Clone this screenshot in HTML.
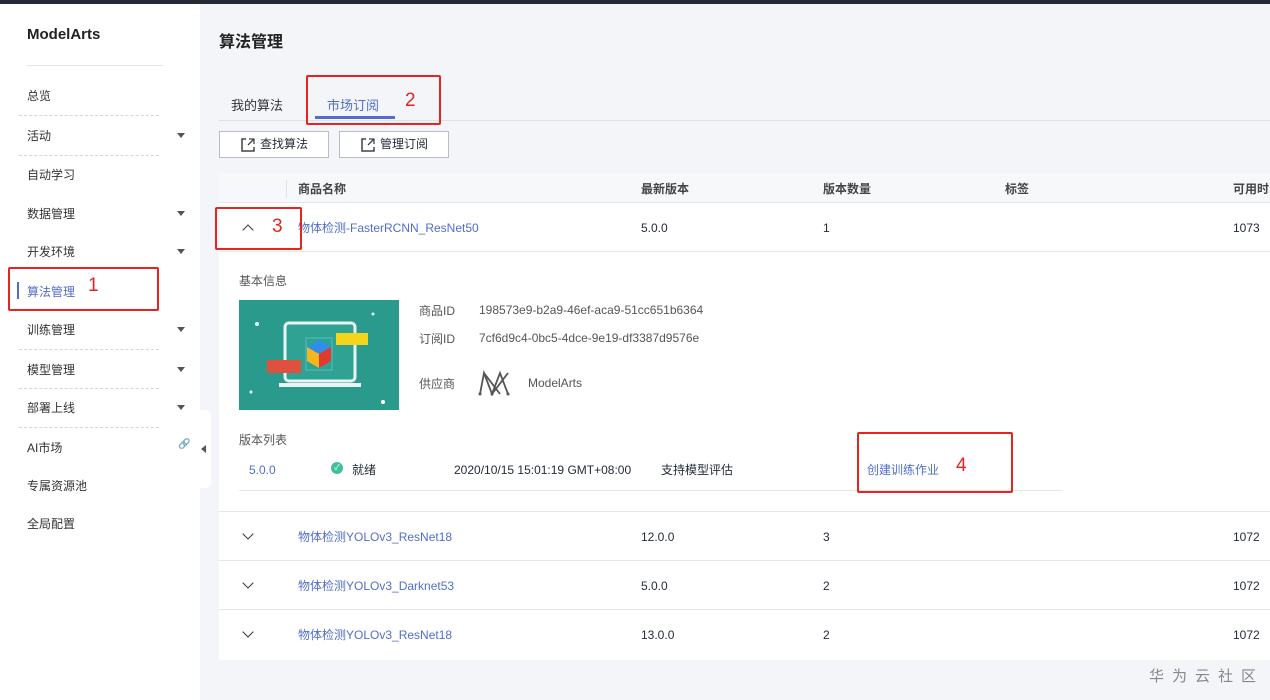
<!DOCTYPE html>
<html><head><meta charset="utf-8"><style>
*{margin:0;padding:0;box-sizing:border-box}
body{width:1270px;height:700px;overflow:hidden;background:#f3f5f9;font-family:"Liberation Sans","Noto Sans CJK SC",sans-serif;font-size:12px;color:#252b3a;position:relative}
.a{position:absolute}
.top{left:0;top:0;width:1270px;height:4px;background:#252933}
.side{left:0;top:4px;width:200px;height:696px;background:#fff}
.nav{left:27px;color:#333;font-size:12px}
.dash{left:19px;width:140px;border-top:1px dashed #d4d6da}
.tri{width:0;height:0;border-left:4px solid transparent;border-right:4px solid transparent;border-top:5px solid #555}
.red{border:2px solid #e52420;border-radius:2px}
.rn{color:#e52420;font-size:19px}
.btn{height:27px;border:1px solid #b8bcc4;background:#fff;font-size:12px;padding-left:40px;line-height:25px}
.card{left:219px;top:173px;width:1051px;height:487px;background:#fff}
.hd{left:219px;top:173px;width:1051px;height:30px;background:#f7f8fa;border-bottom:1px solid #e5e7eb}
.link{color:#526ecc}
.line{left:219px;width:1051px;border-top:1px solid #e5e7eb}
.chev{width:8px;height:8px;border-left:1.5px solid #333;border-bottom:1.5px solid #333}
</style></head><body>
<div class="a top"></div>
<div class="a side"></div>
<div class="a" style="left:27px;top:26px;font-size:15px;font-weight:bold;color:#222">ModelArts</div>
<div class="a" style="left:27px;top:65px;width:136px;border-top:1px solid #e3e5e8"></div>
<div class="a nav" style="top:87px">总览</div>
<div class="a dash" style="top:115px"></div>
<div class="a nav" style="top:127px">活动</div><div class="a tri" style="left:177px;top:133px"></div>
<div class="a dash" style="top:155px"></div>
<div class="a nav" style="top:166px">自动学习</div>
<div class="a nav" style="top:205px">数据管理</div><div class="a tri" style="left:177px;top:211px"></div>
<div class="a nav" style="top:243px">开发环境</div><div class="a tri" style="left:177px;top:249px"></div>
<div class="a" style="left:17px;top:282px;width:2px;height:17px;background:#526ecc"></div>
<div class="a nav" style="top:283px;color:#526ecc">算法管理</div>
<div class="a dash" style="top:310px"></div>
<div class="a nav" style="top:321px">训练管理</div><div class="a tri" style="left:177px;top:327px"></div>
<div class="a dash" style="top:349px"></div>
<div class="a nav" style="top:361px">模型管理</div><div class="a tri" style="left:177px;top:367px"></div>
<div class="a dash" style="top:388px"></div>
<div class="a nav" style="top:399px">部署上线</div><div class="a tri" style="left:177px;top:405px"></div>
<div class="a dash" style="top:427px"></div>
<div class="a nav" style="top:439px">AI市场</div><div class="a" style="left:178px;top:439px;font-size:10px;color:#777">🔗</div>
<div class="a nav" style="top:477px">专属资源池</div>
<div class="a nav" style="top:515px">全局配置</div>
<div class="a" style="left:197px;top:410px;width:14px;height:78px;background:#fff;border-radius:0 6px 6px 0"></div>
<div class="a" style="left:201px;top:445px;width:0;height:0;border-top:4px solid transparent;border-bottom:4px solid transparent;border-right:5px solid #555"></div>
<div class="a red" style="left:8px;top:267px;width:151px;height:44px"></div><div class="a rn" style="left:88px;top:275px">1</div>

<div class="a" style="left:219px;top:28px;font-size:16px;font-weight:bold;color:#222">算法管理</div>
<div class="a" style="left:219px;top:120px;width:1051px;border-top:1px solid #dfe1e6"></div>
<div class="a" style="left:231px;top:95px;font-size:13px;color:#333">我的算法</div>
<div class="a" style="left:327px;top:95px;font-size:13px;color:#526ecc">市场订阅</div>
<div class="a" style="left:315px;top:116px;width:80px;height:3px;background:#526ecc"></div>
<div class="a red" style="left:306px;top:75px;width:135px;height:50px"></div><div class="a rn" style="left:405px;top:90px">2</div>
<div class="a btn" style="left:219px;top:131px;width:110px">查找算法</div>
<div class="a btn" style="left:339px;top:131px;width:110px">管理订阅</div>
<svg class="a" style="left:240px;top:137px" width="16" height="16"><path d="M6 2 H2 V14 H14 V10" stroke="#444" stroke-width="1.5" fill="none"/><path d="M9 2 H14 V7 M14 2 L8 8" stroke="#444" stroke-width="1.3" fill="none"/></svg>
<svg class="a" style="left:360px;top:137px" width="16" height="16"><path d="M6 2 H2 V14 H14 V10" stroke="#444" stroke-width="1.5" fill="none"/><path d="M9 2 H14 V7 M14 2 L8 8" stroke="#444" stroke-width="1.3" fill="none"/></svg>

<div class="a card"></div>
<div class="a hd"></div>
<div class="a" style="left:286px;top:180px;height:18px;border-left:1px solid #e0e2e6"></div>
<div class="a" style="left:298px;top:180px;font-weight:bold;color:#444">商品名称</div>
<div class="a" style="left:641px;top:180px;font-weight:bold;color:#444">最新版本</div>
<div class="a" style="left:823px;top:180px;font-weight:bold;color:#444">版本数量</div>
<div class="a" style="left:1005px;top:180px;font-weight:bold;color:#444">标签</div>
<div class="a" style="left:1233px;top:180px;font-weight:bold;color:#444">可用时</div>

<div class="a chev" style="left:244px;top:226px;transform:rotate(135deg)"></div>
<div class="a link" style="left:298px;top:219px">物体检测-FasterRCNN_ResNet50</div>
<div class="a" style="left:641px;top:221px">5.0.0</div>
<div class="a" style="left:823px;top:221px">1</div>
<div class="a" style="left:1233px;top:221px">1073</div>
<div class="a line" style="top:251px"></div>
<div class="a red" style="left:215px;top:207px;width:87px;height:43px"></div><div class="a rn" style="left:272px;top:216px">3</div>

<div class="a" style="left:239px;top:272px;color:#555">基本信息</div>
<div class="a" style="left:239px;top:300px;width:160px;height:110px;background:#2a9a8d">
<svg width="160" height="110"><circle cx="18" cy="24" r="2" fill="#dff"/><circle cx="134" cy="14" r="1.5" fill="#dff"/><circle cx="12" cy="92" r="1.5" fill="#dff"/><circle cx="144" cy="102" r="2" fill="#fff"/>
<rect x="46" y="23" width="70" height="58" rx="4" fill="#2fa294" stroke="#e8f4f2" stroke-width="3"/><rect x="40" y="83" width="82" height="4" fill="#e8f4f2"/>
<rect x="67" y="38" width="26" height="32" fill="none" stroke="#6cc" stroke-width="0.7"/>
<polygon points="80,40 92,47 80,54 68,47" fill="#2f8fe8"/><polygon points="68,47 80,54 80,68 68,61" fill="#f5b71c"/><polygon points="92,47 80,54 80,68 92,61" fill="#e33a2e"/>
<rect x="97" y="33" width="32" height="12" fill="#f5d51c"/><rect x="28" y="60" width="34" height="13" fill="#e0503e"/></svg></div>
<div class="a" style="left:419px;top:302px;color:#555">商品ID</div><div class="a" style="left:479px;top:303px;color:#555">198573e9-b2a9-46ef-aca9-51cc651b6364</div>
<div class="a" style="left:419px;top:330px;color:#555">订阅ID</div><div class="a" style="left:479px;top:331px;color:#555">7cf6d9c4-0bc5-4dce-9e19-df3387d9576e</div>
<div class="a" style="left:419px;top:375px;color:#555">供应商</div>
<svg class="a" style="left:478px;top:369px" width="36" height="28"><path d="M2 25 L6 4 L14 25 L22 4 L30 25 M6 4 L22 25 M14 25 L30 4" stroke="#555" stroke-width="1.8" fill="none"/><circle cx="2" cy="25" r="1.5" fill="#555"/><circle cx="14" cy="25" r="1.5" fill="#555"/><circle cx="30" cy="25" r="1.5" fill="#555"/></svg>
<div class="a" style="left:528px;top:376px;color:#555">ModelArts</div>
<div class="a" style="left:239px;top:431px;color:#555">版本列表</div>
<div class="a link" style="left:249px;top:463px">5.0.0</div>
<div class="a" style="left:331px;top:462px;width:12px;height:12px;border-radius:50%;background:#3fbf9a;color:#fff;font-size:8px;text-align:center;line-height:12px">✓</div>
<div class="a" style="left:352px;top:461px">就绪</div>
<div class="a" style="left:454px;top:463px">2020/10/15 15:01:19 GMT+08:00</div>
<div class="a" style="left:661px;top:461px">支持模型评估</div>
<div class="a link" style="left:867px;top:461px">创建训练作业</div>
<div class="a" style="left:239px;top:490px;width:824px;border-top:1px solid #e5e7eb"></div>
<div class="a red" style="left:857px;top:432px;width:156px;height:61px"></div><div class="a rn" style="left:956px;top:455px">4</div>
<div class="a line" style="top:511px"></div>

<div class="a chev" style="left:244px;top:530px;transform:rotate(-45deg)"></div>
<div class="a link" style="left:298px;top:528px">物体检测YOLOv3_ResNet18</div><div class="a" style="left:641px;top:530px">12.0.0</div><div class="a" style="left:823px;top:530px">3</div><div class="a" style="left:1233px;top:530px">1072</div>
<div class="a line" style="top:560px"></div>
<div class="a chev" style="left:244px;top:579px;transform:rotate(-45deg)"></div>
<div class="a link" style="left:298px;top:577px">物体检测YOLOv3_Darknet53</div><div class="a" style="left:641px;top:579px">5.0.0</div><div class="a" style="left:823px;top:579px">2</div><div class="a" style="left:1233px;top:579px">1072</div>
<div class="a line" style="top:609px"></div>
<div class="a chev" style="left:244px;top:628px;transform:rotate(-45deg)"></div>
<div class="a link" style="left:298px;top:626px">物体检测YOLOv3_ResNet18</div><div class="a" style="left:641px;top:628px">13.0.0</div><div class="a" style="left:823px;top:628px">2</div><div class="a" style="left:1233px;top:628px">1072</div>
<div class="a" style="left:1149px;top:665px;font-size:15px;color:#888;letter-spacing:8px">华为云社区</div>
</body></html>
